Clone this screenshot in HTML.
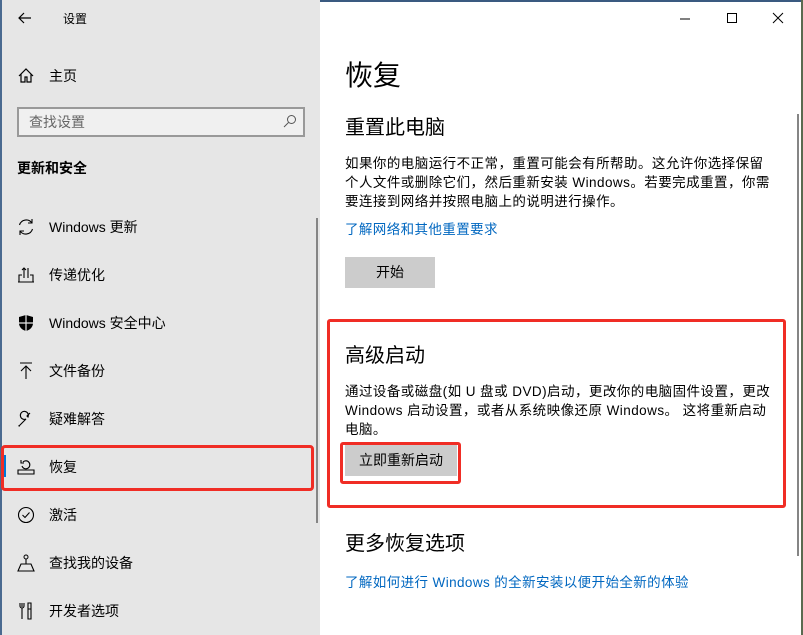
<!DOCTYPE html>
<html><head><meta charset="utf-8"><style>
*{margin:0;padding:0;box-sizing:border-box}
body{width:803px;height:635px;overflow:hidden;position:relative;background:#fff;font-family:"Liberation Sans","Noto Sans CJK SC",sans-serif;color:#000}
.a{position:absolute;white-space:nowrap}
#side{position:absolute;left:0;top:0;width:320px;height:635px;background:#e6e6e6}
.it{position:absolute;left:49px;font-size:14px}
.ic{position:absolute;left:17px;width:18px;height:18px}
.p{font-size:13.5px;line-height:19px;letter-spacing:0.45px}
.lk{color:#0067c0;font-size:13.5px;letter-spacing:0.4px}
</style></head><body>
<div id="side">
<div style="position:absolute;left:0;top:0;width:2px;height:635px;background:#4a6a90"></div>
<svg class="a" style="left:17px;top:10px" width="16" height="16" viewBox="0 0 16 16"><path d="M14 8H2M7 3L2 8l5 5" fill="none" stroke="#000" stroke-width="1.2"/></svg>
<div class="a" style="left:63px;top:10px;font-size:12px">设置</div>
<svg class="ic" style="top:67px" viewBox="0 0 18 18"><path d="M2 9L9 2l7 7M4 7v8h4v-5h2v5h4V7" fill="none" stroke="#000" stroke-width="1.2"/></svg>
<div class="it" style="top:66px">主页</div>
<div class="a" style="left:17px;top:107px;width:288px;height:30px;border:2px solid #999;background:#f0f0f0"></div>
<div class="a" style="left:29px;top:112px;font-size:14px;color:#666">查找设置</div>
<svg class="a" style="left:283px;top:114px" width="14" height="14" viewBox="0 0 14 14"><circle cx="8.5" cy="5.5" r="4" fill="none" stroke="#555" stroke-width="1"/><path d="M5.5 8.5L1 13" stroke="#555"/></svg>
<div class="a" style="left:17px;top:158px;font-size:14px;font-weight:bold">更新和安全</div>
<svg class="ic" style="top:218px" viewBox="0 0 18 18"><path d="M2.5 7A7 7 0 0 1 15 5M15.5 11A7 7 0 0 1 3 13M15 1v4h-4M3 17v-4h4" fill="none" stroke="#000" stroke-width="1.1"/></svg>
<div class="it" style="top:217px">Windows 更新</div>
<svg class="ic" style="top:266px" viewBox="0 0 18 18"><path d="M1 16h16M2 16V9h3M16 16V9h-3M7 12V2M5 4l2-2 2 2M11 12V2M11 2" fill="none" stroke="#000" stroke-width="1.1"/></svg>
<div class="it" style="top:265px">传递优化</div>
<svg class="ic" style="top:314px" viewBox="0 0 18 18"><path d="M9 1L2 3v6c0 4 3 7 7 8 4-1 7-4 7-8V3z" fill="#000"/><path d="M9 1v16M2 9h14" stroke="#e6e6e6" stroke-width="1.2"/></svg>
<div class="it" style="top:313px">Windows 安全中心</div>
<svg class="ic" style="top:362px" viewBox="0 0 18 18"><path d="M3 1h12M9 17V4M4 9l5-5 5 5" fill="none" stroke="#000" stroke-width="1.1"/></svg>
<div class="it" style="top:361px">文件备份</div>
<svg class="ic" style="top:410px" viewBox="0 0 18 18"><path d="M2 16l7-7a4 4 0 1 1 2 -2l-1 -1 3-3M9 9l-7 7" fill="none" stroke="#000" stroke-width="1.1"/><path d="M1.5 15.5l1 1" stroke="#000"/></svg>
<div class="it" style="top:409px">疑难解答</div>
<div class="a" style="left:3px;top:455px;width:3px;height:22px;background:#0078d7"></div>
<svg class="ic" style="top:458px" viewBox="0 0 18 18"><path d="M1 16h16v-4H1zM5 8a4 4 0 1 0 1-4M4 2v3h3" fill="none" stroke="#000" stroke-width="1.1"/></svg>
<div class="it" style="top:457px">恢复</div>
<div class="a" style="left:1px;top:445px;width:313px;height:46px;border:3px solid #f02d25;border-radius:4px"></div>
<svg class="ic" style="top:506px" viewBox="0 0 18 18"><circle cx="9" cy="9" r="7.5" fill="none" stroke="#000" stroke-width="1.1"/><path d="M5.5 9l2.5 2.5 4.5-5" fill="none" stroke="#000" stroke-width="1.1"/></svg>
<div class="it" style="top:505px">激活</div>
<svg class="ic" style="top:554px" viewBox="0 0 18 18"><circle cx="9" cy="3" r="2" fill="none" stroke="#000"/><path d="M9 5v5M1 17h16l-3-7H4z" fill="none" stroke="#000" stroke-width="1.1"/></svg>
<div class="it" style="top:553px">查找我的设备</div>
<svg class="ic" style="top:602px" viewBox="0 0 18 18"><path d="M5 1v4M3 1v3a2 2 0 0 0 4 0V1M5 6v11M11 1h3v6h-3zM11 7h3v10h-3z" fill="none" stroke="#000" stroke-width="1.1"/></svg>
<div class="it" style="top:601px">开发者选项</div>
<div class="a" style="left:316px;top:218px;width:2px;height:305px;background:#858585"></div>
</div>
<div class="a" style="left:320px;top:0;width:483px;height:2px;background:#3a5a80"></div>
<svg class="a" style="left:680px;top:12px" width="110" height="14" viewBox="0 0 110 14"><path d="M0 7h10" stroke="#000"/><rect x="47.5" y="1.5" width="9" height="9" fill="none" stroke="#000"/><path d="M93 1l10 10M103 1L93 11" stroke="#000"/></svg>
<div class="a" style="left:345px;top:54px;font-size:28px">恢复</div>
<div class="a" style="left:345px;top:111px;font-size:20px">重置此电脑</div>
<div class="a p" style="left:345px;top:154px">如果你的电脑运行不正常，重置可能会有所帮助。这允许你选择保留<br>个人文件或删除它们，然后重新安装 Windows。若要完成重置，你需<br>要连接到网络并按照电脑上的说明进行操作。</div>
<div class="a lk" style="left:345px;top:218px">了解网络和其他重置要求</div>
<div class="a" style="left:345px;top:257px;width:90px;height:31px;background:#ccc;font-size:14px;text-align:center;line-height:31px">开始</div>
<div class="a" style="left:327px;top:319px;width:459px;height:189px;border:3px solid #f02d25;border-radius:3px"></div>
<div class="a" style="left:345px;top:339px;font-size:20px">高级启动</div>
<div class="a p" style="left:345px;top:382px">通过设备或磁盘(如 U 盘或 DVD)启动，更改你的电脑固件设置，更改<br>Windows 启动设置，或者从系统映像还原 Windows。 这将重新启动<br>电脑。</div>
<div class="a" style="left:345px;top:445px;width:112px;height:31px;background:#ccc;font-size:14px;text-align:center;line-height:31px">立即重新启动</div>
<div class="a" style="left:340px;top:442px;width:121px;height:42px;border:3px solid #f02d25;border-radius:3px"></div>
<div class="a" style="left:345px;top:527px;font-size:20px">更多恢复选项</div>
<div class="a lk" style="left:345px;top:571px">了解如何进行 Windows 的全新安装以便开始全新的体验</div>
<div class="a" style="left:797px;top:114px;width:2px;height:442px;background:#858585"></div>
<div class="a" style="left:801px;top:0;width:2px;height:635px;background:#5a6a50"></div>
</body></html>
